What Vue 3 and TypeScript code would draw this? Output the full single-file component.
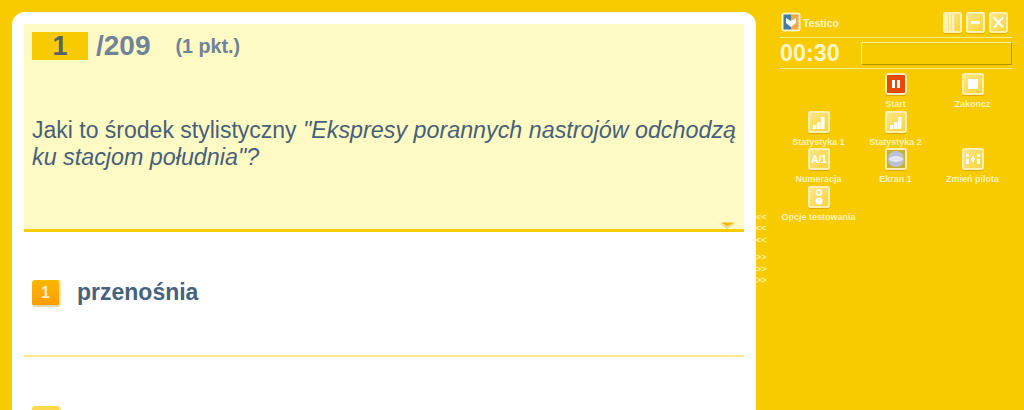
<script setup lang="ts">
interface Tool { label: string; icon: string }
const tools: (Tool | null)[] = [
  null,
  { label: 'Start', icon: 'pause' },
  { label: 'Zakoncz', icon: 'stop' },
  { label: 'Statystyka 1', icon: 'stats' },
  { label: 'Statystyka 2', icon: 'stats' },
  null,
  { label: 'Numeracja', icon: 'num' },
  { label: 'Ekran 1', icon: 'screen' },
  { label: 'Zmień pilota', icon: 'pilot' },
  { label: 'Opcje testowania', icon: 'options' },
]
const bars = [[5, 14], [9, 11], [13, 6]]
</script>

<template>
  <div class="page">
    <main class="card">
      <section class="question">
        <div class="counter">
          <span class="current">1</span>
          <span class="total">/209</span>
          <span class="points">(1 pkt.)</span>
        </div>
        <p class="text">Jaki to środek stylistyczny <em>"Ekspresy porannych nastrojów odchodzą</em><br /><em>ku stacjom południa"?</em></p>
        <svg class="fold" viewBox="0 0 18 7" width="18" height="7">
          <path d="M0 0 L9 7 L18 1 L9 5 Z" fill="#e6d48a" />
          <path d="M3 0.500 L17 0.500 L9 4.500 Z" fill="#f4b60a" />
        </svg>
      </section>
      <section class="answer">
        <span class="badge">1</span>
        <span class="answer-text">przenośnia</span>
      </section>
      <section class="answer">
        <span class="badge pale"></span>
      </section>
    </main>

    <div class="arrows">
      <div class="arrow-group"><span>&lt;&lt;</span><span>&lt;&lt;</span><span>&lt;&lt;</span></div>
      <div class="arrow-group"><span>&gt;&gt;</span><span>&gt;&gt;</span><span>&gt;&gt;</span></div>
    </div>

    <aside class="side">
      <header class="head">
        <svg class="logo" viewBox="0 0 20 20" width="20" height="20">
          <rect x="0.500" y="0.500" width="19" height="19" rx="3" fill="#fff3c0" />
          <rect x="2.500" y="2.500" width="8" height="15" fill="#3d7ea6" />
          <rect x="10" y="2.500" width="7.500" height="15" fill="#f0a84c" />
          <path d="M5 6 L10 9 L15 6 L15 11 L10 15 L5 11 Z" fill="#fff" />
        </svg>
        <span class="brand">Testico</span>
        <div class="win-buttons">
          <span class="win">
            <svg viewBox="0 0 19 21" width="19" height="21"><path d="M2 2h10v17H2z" fill="#fff6c8" opacity=".8" /><path d="M5 2h1v17H5zM8 2h1v17H8zM11 2h1v17h-1z" fill="#fde27a" /></svg>
          </span>
          <span class="win">
            <svg viewBox="0 0 19 21" width="19" height="21"><rect x="5" y="9" width="9" height="3" fill="#fff" /></svg>
          </span>
          <span class="win">
            <svg viewBox="0 0 19 21" width="19" height="21"><path d="M5 5.500 L14 15.500 M14 5.500 L5 15.500" stroke="#fff" stroke-width="2" /></svg>
          </span>
        </div>
      </header>
      <div class="timer">
        <span class="time">00:30</span>
        <div class="progress"></div>
      </div>
      <div class="tools">
        <template v-for="(tool, i) in tools" :key="i">
          <div v-if="tool" class="tool">
            <span class="tool-icon" :class="{ active: tool.icon === 'pause' }">
              <svg viewBox="0 0 22 22" width="22" height="22">
                <g v-if="tool.icon === 'pause'" fill="#fff">
                  <rect x="7" y="7" width="3" height="8" />
                  <rect x="12" y="7" width="3" height="8" />
                </g>
                <rect v-else-if="tool.icon === 'stop'" x="6" y="6" width="10" height="10" fill="#fff" />
                <g v-else-if="tool.icon === 'stats'" fill="#fff">
                  <rect v-for="b in bars" :key="b[0]" :x="b[0]" :y="b[1]" width="3.500" :height="18 - b[1]" />
                </g>
                <text v-else-if="tool.icon === 'num'" x="11" y="15" class="icon-text">A/1</text>
                <g v-else-if="tool.icon === 'screen'">
                  <rect x="2" y="2" width="18" height="18" fill="#c9b230" />
                  <circle cx="11" cy="11" r="8" fill="#b9c0d8" />
                  <ellipse cx="11" cy="11" rx="7" ry="3" fill="#e3e6f0" />
                </g>
                <g v-else-if="tool.icon === 'pilot'" fill="#fff">
                  <rect x="4" y="6" width="3" height="3" />
                  <rect x="4" y="11" width="3" height="5" />
                  <rect x="15" y="6" width="3" height="3" />
                  <rect x="15" y="11" width="3" height="5" />
                  <rect x="9" y="10" width="4" height="2" />
                  <rect x="10" y="8" width="2" height="6" />
                </g>
                <g v-else>
                  <circle cx="11" cy="6.500" r="2.500" fill="none" stroke="#fff" stroke-width="1.500" />
                  <circle cx="11" cy="15" r="3.500" fill="#fff" />
                </g>
              </svg>
            </span>
            <span class="tool-label">{{ tool.label }}</span>
          </div>
          <div v-else class="tool"></div>
        </template>
      </div>
    </aside>
  </div>
</template>

<style>
html, body { margin: 0; height: 100%; overflow: hidden; background: #f7cb00; }
</style>

<style scoped>
.page {
  display: flex;
  height: 410px;
  overflow: hidden;
  padding: 12px 0 0 12px;
  box-sizing: border-box;
  background: #f7cb00;
  font-family: "Liberation Sans", Arial, sans-serif;
}
.card {
  flex: none;
  width: 744px;
  height: 420px;
  padding: 12px;
  box-sizing: border-box;
  background: #fff;
  border-radius: 13px 13px 0 0;
}
.question {
  position: relative;
  height: 208px;
  box-sizing: border-box;
  padding: 8px 8px 0;
  background: #fefac4;
  border-bottom: 3px solid #f7cb00;
}
.counter { display: flex; align-items: center; height: 28px; }
.current {
  width: 56px;
  text-align: center;
  line-height: 28px;
  background: #f7cb00;
  color: #56626a;
  font-size: 27px;
  font-weight: 700;
}
.total { margin-left: 8px; color: #6e8298; font-size: 28px; font-weight: 700; }
.points { margin-left: 25px; color: #6e8298; font-size: 19.700px; font-weight: 700; }
.text {
  margin: 57px 0 0;
  color: #47607a;
  font-size: 23px;
  line-height: 27px;
  white-space: nowrap;
}
.text em { font-size: 23.300px; }
.fold { position: absolute; right: 8px; bottom: 0; }
.answer {
  display: flex;
  align-items: flex-start;
  height: 125px;
  box-sizing: border-box;
  padding: 48px 8px 0;
  border-bottom: 2px solid #fbe88c;
}
.answer + .answer { padding-top: 49px; }
.badge {
  flex: none;
  width: 29px;
  height: 27px;
  box-sizing: border-box;
  border-radius: 3px;
  background: linear-gradient(#f9b800, #ff9c00);
  border-right: 2px solid #f5e7b0;
  border-bottom: 2px solid #e6d8a4;
  color: #ffeec0;
  font-size: 16px;
  font-weight: 700;
  line-height: 25px;
  text-align: center;
}
.badge.pale { background: #fbd84a; }
.answer-text {
  margin-left: 16px;
  color: #46627c;
  font-size: 23px;
  font-weight: 700;
  line-height: 24px;
}
.arrows {
  flex: none;
  width: 24px;
  padding-top: 200px;
  box-sizing: border-box;
}
.arrow-group { display: flex; flex-direction: column; margin-bottom: 6.500px; }
.arrow-group span {
  height: 11.300px;
  line-height: 11.300px;
  color: #fff3a0;
  font-size: 9px;
  font-weight: 700;
}
.side { flex: none; width: 232px; }
.head { display: flex; align-items: flex-start; height: 25px; border-bottom: 1px solid #fdeb90; }
.logo { flex: none; margin: 0 2px 0 1px; }
.brand { color: #fff3c0; font-size: 10.500px; font-weight: 700; line-height: 22px; }
.win-buttons { display: flex; gap: 4px; margin: 0 4px 0 auto; }
.win, .tool-icon {
  display: block;
  box-sizing: border-box;
  border-radius: 3px;
  background: linear-gradient(135deg, #fde78e, #f9d335);
  box-shadow: inset 0 0 0 2px #fff0b0, 0 1px 0 #d9a900;
}
.win { width: 19px; height: 21px; }
.win svg, .tool-icon svg { display: block; }
.timer {
  display: flex;
  align-items: center;
  height: 30px;
  border-bottom: 1px solid #fdeb90;
}
.time { width: 81px; color: #fff6c8; font-size: 23.300px; font-weight: 700; }
.progress {
  flex: 1;
  height: 23px;
  box-sizing: border-box;
  border-top: 1px solid #fff0a0;
  border-left: 1px solid #fff0a0;
  border-right: 1px solid #b99400;
  border-bottom: 1px solid #b99400;
}
.tools {
  display: grid;
  grid-template-columns: repeat(3, 77px);
  grid-auto-rows: 37.500px;
  margin-top: 4px;
}
.tool { display: flex; flex-direction: column; align-items: center; white-space: nowrap; }
.tool-icon { width: 22px; height: 22px; }
.tool-icon.active { background: #ea4a00; }
.tool-label {
  margin-top: 4px;
  color: #fff3b8;
  font-size: 9px;
  font-weight: 700;
  line-height: 11px;
}
.icon-text { fill: #fff; font-size: 10px; font-weight: 700; text-anchor: middle; }
</style>
